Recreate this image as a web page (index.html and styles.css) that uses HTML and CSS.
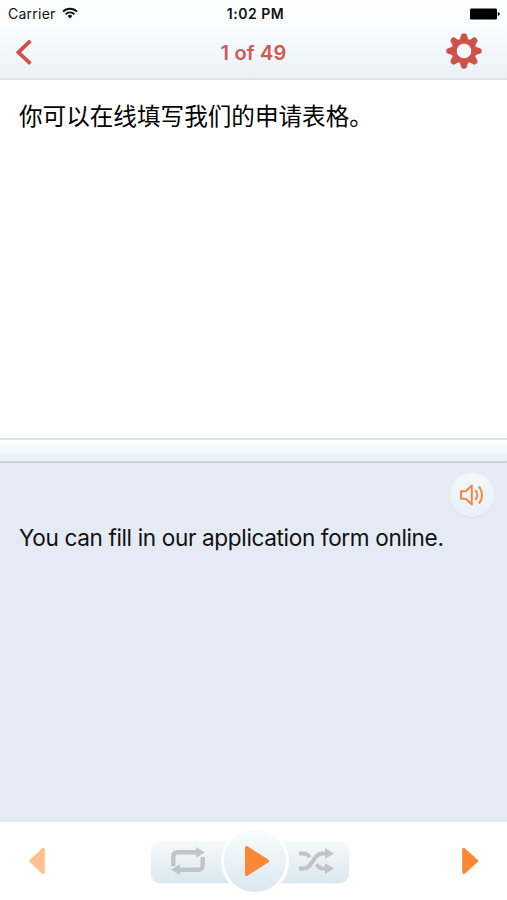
FILE: index.html
```html
<!DOCTYPE html>
<html lang="en">
<head>
<meta charset="utf-8">
<title>Phrases</title>
<link rel="stylesheet" href="styles.css">
</head>
<body>
<div class="app">
  <header class="header">
    <div class="status">
      <div class="carrier"><span>Carrier</span>
        <svg class="wifi" width="16" height="12" viewBox="0 0 16 12" fill="none" stroke="#111" stroke-width="1.9"><path d="M1 4.6a10 10 0 0 1 14 0M3.6 7.2a6.3 6.3 0 0 1 8.8 0"/><path d="M5.6 9a3.5 3.5 0 0 1 4.8 0L8 11.6z" fill="#111" stroke="none"/></svg>
      </div>
      <span class="time">1:02 PM</span>
      <svg class="battery" width="31" height="12" viewBox="0 0 31 12"><rect x="1" y=".4" width="27" height="11.2" rx="1.4"/><path d="M28.800 4q2 .4 2 2t-2 2z"/></svg>
    </div>
    <nav class="nav">
      <svg class="back" width="18" height="28" viewBox="0 0 18 28" fill="none" stroke="#cf5147" stroke-width="3.8"><path d="M15.4 2.800 3.400 14.300l12 11.400"/></svg>
      <h1 class="title">1 of 49</h1>
      <svg class="gear" width="36" height="36" viewBox="-18 -18 36 36">
        <defs><path id="tooth" d="M-5.400-10C-4-11.800-3.500-13-3.100-15.400Q-2.600-17.800 0-17.800T3.100-15.400C3.500-13 4-11.800 5.400-10z"/></defs>
        <g fill="#cf5147"><use href="#tooth"/><use href="#tooth" transform="rotate(45)"/><use href="#tooth" transform="rotate(90)"/><use href="#tooth" transform="rotate(135)"/><use href="#tooth" transform="rotate(180)"/><use href="#tooth" transform="rotate(225)"/><use href="#tooth" transform="rotate(270)"/><use href="#tooth" transform="rotate(315)"/></g>
        <circle r="9.800" fill="none" stroke="#cf5147" stroke-width="5.200"/><circle r="7.200" fill="#f4f9fc"/>
      </svg>
    </nav>
  </header>
  <section class="source" lang="zh-CN"><p>你可以在线填写我们的申请表格。</p></section>
  <div class="divider"></div>
  <section class="translation">
    <button class="speaker" aria-label="Listen"><svg width="26" height="24" viewBox="0 0 26 24" fill="none" stroke="#f28b40" stroke-width="2"><path d="M2 8.2h4.8l6-5.700v19l-6-5.700H2zM16.500 7.200q3.400 4.800 0 9.600M20 3.300q6.200 8.700 0 17.400" stroke-linejoin="round"/></svg></button>
    <p>You can fill in our application form online.</p>
  </section>
  <footer class="controls">
    <svg class="previous" width="17" height="28" viewBox="0 0 17 28"><path d="M14.500 1 1.700 13q-1 1 0 2L14.500 27q2.300.7 2.300-2V3q0-2.700-2.300-2z" fill="#fdc08e"/></svg>
    <div class="player">
      <div class="bar">
        <svg width="34" height="28" viewBox="0 0 34 28"><path d="M2.300 19V9.500q0-4.300 4.300-4.300H25M31.700 10v8q0 4.800-4.800 4.800H9" fill="none" stroke="#bdc5cb" stroke-width="4.400"/><path d="M25 .3 34 5.400l-9 5.300zM9 17.300 0 22.800l9 5.100z" fill="#bdc5cb"/></svg>
        <svg width="35" height="26" viewBox="0 0 35 26"><path d="M0 20.500h5c8 0 9.500-15 18-15h4M0 5.500h4.500q4 0 6.300 3.700M17.500 16.300q2.300 4.200 6.500 4.200h3" fill="none" stroke="#bdc5cb" stroke-width="4"/><path d="m26 0 9 5.500-9 5.300zM26 15.200l9 5.300-9 5.500z" fill="#bdc5cb"/></svg>
      </div>
      <button class="play" aria-label="Play"><svg width="26" height="32" viewBox="0 0 26 32"><path d="M1 3q0-2.900 2.500-1.700L24.200 14.600q1.600 1.400 0 2.800L3.500 30.700Q1 31.900 1 29z" fill="#fb8835"/></svg></button>
    </div>
    <svg class="next" width="17" height="28" viewBox="0 0 17 28"><path d="m2.500 1 13.300 12q1 1 0 2L2.500 27Q.2 27.700.2 25V3Q.2.300 2.500 1z" fill="#fb8835"/></svg>
  </footer>
</div>
</body>
</html>
```
FILE: styles.css
```css
* { box-sizing: border-box; }
body { margin: 0; font-family: Inter, "Noto Sans CJK SC", sans-serif; color: #111; }
p, h1 { margin: 0; }
button { border: 0; padding: 0; }
svg { display: block; flex: none; }
.app { width: 507px; height: 900px; display: flex; flex-direction: column; background: #fff; overflow: hidden; }
.header { height: 80px; background: linear-gradient(#fff, #f8fcfe 38%, #eaf2f7); border-bottom: 2px solid #dce3e6; }
.status { height: 27px; padding: 0 7px 0 8px; display: grid; grid-template-columns: 1fr auto 1fr; align-items: center; font-size: 14px; line-height: 27px; }
.carrier { display: flex; align-items: center; gap: 6px; letter-spacing: .25px; }
.wifi { margin-top: -2px; }
.time { font-weight: 600; font-size: 14px; letter-spacing: .5px; padding-left: 3px; }
.battery { justify-self: end; }
.nav { height: 51px; padding: 0 25px 0 15px; display: grid; grid-template-columns: 1fr auto 1fr; align-items: center; }
.back { margin-top: -1px; }
.gear { justify-self: end; margin-top: -4px; }
.title { font-size: 20px; font-weight: 600; line-height: 28px; letter-spacing: .2px; color: #cf5950; margin-left: 10px; }
.source { height: 358px; padding: 17px 19px; font-size: 23.6px; line-height: 36px; font-family: "Noto Sans CJK SC", sans-serif; color: #000; }
.divider { height: 25px; border-top: 2px solid #dfe2e3; border-bottom: 2px solid #c7d3db; background: linear-gradient(#fff, #e6f0f6); }
.translation { height: 359px; background: #e4ebf4; padding: 10px 13px 0 19px; display: flex; flex-direction: column; font-size: 22.6px; line-height: 32px; letter-spacing: -.37px; color: #111; }
.translation p { margin-top: 5px; white-space: nowrap; }
.speaker { width: 44px; height: 44px; align-self: flex-end; border-radius: 50%; background: linear-gradient(#f3f7fb, #e9f1f7); display: flex; align-items: center; justify-content: center; box-shadow: 0 1px 1px #d5dfe7; }
.controls { height: 78px; padding: 0 28px; display: flex; justify-content: space-between; align-items: center; }
.player { position: relative; width: 198px; height: 78px; margin-right: 7px; display: flex; align-items: center; }
.bar { width: 100%; height: 41px; border-radius: 9px; background: linear-gradient(#f5f9fc, #dce8ef); box-shadow: 0 1px 1px #d3dde3; display: flex; justify-content: space-between; align-items: center; padding: 0 15px 0 20px; }
.play { position: absolute; left: 70px; top: 5px; width: 68px; height: 68px; border: 3px solid #fff; border-radius: 50%; background: linear-gradient(#f9fcfe, #dae8f0); display: flex; align-items: center; justify-content: center; padding-left: 3px; }
```
